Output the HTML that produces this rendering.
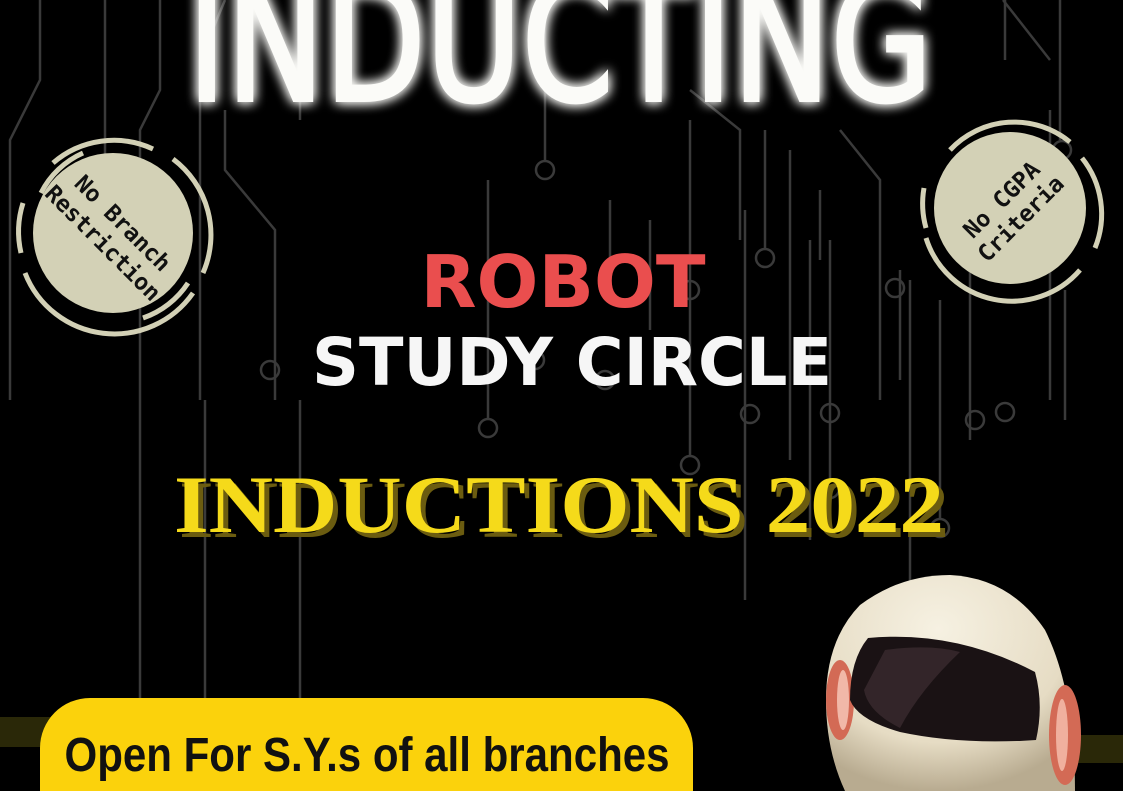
<!DOCTYPE html>
<html><head><meta charset="utf-8"><style>
html,body{margin:0;padding:0;background:#000;width:1123px;height:791px;overflow:hidden}
svg{display:block}
</style></head><body>
<svg width="1123" height="791" viewBox="0 0 1123 791" xmlns="http://www.w3.org/2000/svg">
<defs>
<filter id="glow" x="-20%" y="-50%" width="140%" height="200%">
<feGaussianBlur stdDeviation="6" result="b"/>
<feMerge><feMergeNode in="b"/><feMergeNode in="b"/><feMergeNode in="SourceGraphic"/></feMerge>
</filter>
<radialGradient id="helm" cx="45%" cy="25%" r="75%">
<stop offset="0" stop-color="#f6f1e2"/><stop offset="0.7" stop-color="#e6dcc4"/><stop offset="1" stop-color="#b8ab90"/>
</radialGradient>
</defs>
<rect width="1123" height="791" fill="#000"/>
<g stroke="#3a3a3a" stroke-width="2.5" fill="none">
<path d="M40 0 V80 L10 140 V400"/>
<path d="M160 0 V90 L140 130 V745"/>
<path d="M105 0 V205"/><circle cx="105" cy="215" r="9"/>
<path d="M225 0 L200 60 V400"/>
<path d="M225 110 V170 L275 230 V400"/>
<path d="M300 0 V120"/>
<path d="M205 400 V745"/>
<path d="M300 400 V745"/>
<path d="M545 0 V160"/><circle cx="545" cy="170" r="9"/>
<path d="M488 180 V420"/><circle cx="488" cy="428" r="9"/>
<path d="M690 120 V455"/><circle cx="690" cy="465" r="9"/>
<path d="M610 200 V300"/>
<path d="M650 220 V330"/>
<path d="M690 90 L740 130 V240"/>
<path d="M765 130 V250"/><circle cx="765" cy="258" r="9"/>
<path d="M790 150 V460"/>
<path d="M820 190 V260"/>
<path d="M840 130 L880 180 V400"/>
<path d="M900 270 V380"/>
<path d="M810 240 V540"/>
<path d="M745 210 V600"/>
<path d="M830 240 V480"/><circle cx="830" cy="489" r="9"/>
<path d="M910 280 V610"/>
<path d="M940 300 V520"/><circle cx="940" cy="528" r="9"/>
<path d="M970 250 V440"/>
<circle cx="975" cy="420" r="9"/>
<path d="M1060 0 V140"/><circle cx="1062" cy="150" r="9"/>
<path d="M1005 0 V60"/>
<path d="M1050 110 V400"/>
<path d="M1065 290 V420"/>
<path d="M1003 0 L1050 60"/>
<circle cx="270" cy="370" r="9"/>
<circle cx="605" cy="380" r="9"/>
<circle cx="535" cy="360" r="9"/>
<circle cx="750" cy="414" r="9"/>
<circle cx="830" cy="413" r="9"/>
<circle cx="895" cy="288" r="9"/>
<circle cx="690" cy="290" r="9"/>
<circle cx="1005" cy="412" r="9"/>
</g>
<rect x="0" y="717" width="60" height="30" fill="#2a2808"/>
<rect x="1060" y="735" width="63" height="28" fill="#2a2808"/>
<text x="560" y="100" text-anchor="middle" font-family="DejaVu Sans, sans-serif" font-size="165" fill="#fbfbf8" stroke="#fbfbf8" stroke-width="4" textLength="745" lengthAdjust="spacingAndGlyphs" filter="url(#glow)">INDUCTING</text>
<g transform="translate(113,233)">
<circle r="80" fill="#d3d1b6"/>
<g fill="none" stroke="#d3d1b6" stroke-width="5">
<path d="M-60 -70 A93 93 0 0 1 40 -84"/>
<path d="M60 -74 A95 95 0 0 1 90 40"/>
<path d="M-88 40 A96 96 0 0 0 80 60"/>
<path d="M-90 -30 A95 95 0 0 0 -92 20"/>
<path d="M-72 -40 A86 86 0 0 1 -30 -80"/>
<path d="M30 85 A88 88 0 0 0 75 50"/>
</g>
<g transform="rotate(45)" font-family="DejaVu Sans Mono, Liberation Mono, monospace" font-weight="bold" font-size="23" fill="#111" text-anchor="middle">
<text x="0" y="-6">No Branch</text>
<text x="0" y="22">Restriction</text>
</g>
</g>
<g transform="translate(1010,208)">
<circle r="76" fill="#d3d1b6"/>
<g fill="none" stroke="#d3d1b6" stroke-width="5">
<path d="M-60 -58 A88 88 0 0 1 60 -66"/>
<path d="M72 -50 A90 90 0 0 1 85 40"/>
<path d="M-84 30 A90 90 0 0 0 70 62"/>
<path d="M-86 -20 A90 90 0 0 0 -84 20"/>
</g>
<g transform="rotate(-45)" font-family="DejaVu Sans Mono, Liberation Mono, monospace" font-weight="bold" font-size="23" fill="#111" text-anchor="middle">
<text x="0" y="-4">No CGPA</text>
<text x="0" y="23">Criteria</text>
</g>
</g>
<text x="563" y="307" text-anchor="middle" font-family="DejaVu Sans, sans-serif" font-weight="bold" font-size="72" fill="#ea4e4e" textLength="285" lengthAdjust="spacingAndGlyphs">ROBOT</text>
<text x="572" y="385" text-anchor="middle" font-family="DejaVu Sans, sans-serif" font-weight="bold" font-size="66" fill="#f6f6f6" textLength="520" lengthAdjust="spacingAndGlyphs">STUDY CIRCLE</text>
<text x="564" y="537" text-anchor="middle" font-family="Liberation Serif, serif" font-weight="bold" font-size="82" fill="#6b5c10" textLength="770" lengthAdjust="spacingAndGlyphs">INDUCTIONS 2022</text>
<text x="559" y="532" text-anchor="middle" font-family="Liberation Serif, serif" font-weight="bold" font-size="82" fill="#f5da1a" textLength="770" lengthAdjust="spacingAndGlyphs">INDUCTIONS 2022</text>
<path d="M40 791 V748 A50 50 0 0 1 90 698 H643 A50 50 0 0 1 693 748 V791 Z" fill="#fbd20c"/>
<text x="367" y="771" text-anchor="middle" font-family="Liberation Sans Narrow, Liberation Sans, sans-serif" font-weight="bold" font-size="48" fill="#111" textLength="605" lengthAdjust="spacingAndGlyphs">Open For S.Y.s of all branches</text>
<g>
<path d="M826 700 Q826 640 860 605 Q900 575 950 575 Q1010 578 1045 630 Q1075 690 1075 791 H845 Q826 750 826 700 Z" fill="url(#helm)"/>
<ellipse cx="840" cy="700" rx="14" ry="40" fill="#d36a55"/>
<ellipse cx="843" cy="700" rx="6" ry="30" fill="#f1b8a8"/>
<ellipse cx="1065" cy="735" rx="16" ry="50" fill="#d36a55"/>
<ellipse cx="1062" cy="735" rx="6" ry="36" fill="#f0b09e"/>
<path d="M868 638 Q955 630 1035 672 Q1044 705 1036 740 Q960 745 900 732 Q858 720 850 700 Q850 660 868 638 Z" fill="#1a1214"/>
<path d="M885 650 Q930 644 960 652 Q920 690 900 728 Q868 712 864 690 Z" fill="#3a2a2e" opacity="0.8"/>
</g>
</svg>
</body></html>
